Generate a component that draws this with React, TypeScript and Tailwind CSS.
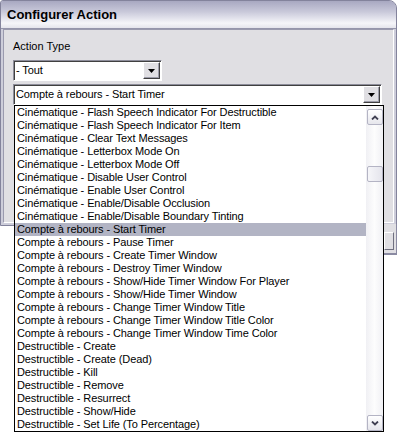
const items = [
  "Cinématique - Flash Speech Indicator For Destructible",
  "Cinématique - Flash Speech Indicator For Item",
  "Cinématique - Clear Text Messages",
  "Cinématique - Letterbox Mode On",
  "Cinématique - Letterbox Mode Off",
  "Cinématique - Disable User Control",
  "Cinématique - Enable User Control",
  "Cinématique - Enable/Disable Occlusion",
  "Cinématique - Enable/Disable Boundary Tinting",
  "Compte à rebours - Start Timer",
  "Compte à rebours - Pause Timer",
  "Compte à rebours - Create Timer Window",
  "Compte à rebours - Destroy Timer Window",
  "Compte à rebours - Show/Hide Timer Window For Player",
  "Compte à rebours - Show/Hide Timer Window",
  "Compte à rebours - Change Timer Window Title",
  "Compte à rebours - Change Timer Window Title Color",
  "Compte à rebours - Change Timer Window Time Color",
  "Destructible - Create",
  "Destructible - Create (Dead)",
  "Destructible - Kill",
  "Destructible - Remove",
  "Destructible - Resurrect",
  "Destructible - Show/Hide",
  "Destructible - Set Life (To Percentage)",
];

const selected = 9;

function DropButton() {
  return (
    <div className="flex h-[17px] w-[17px] items-center justify-center border border-t-white border-l-white border-r-[#404040] border-b-[#404040] bg-[#e0dfe3] shadow-[inset_-1px_-1px_0_#9d9daa]">
      <svg width="7" height="4" viewBox="0 0 7 4">
        <polygon points="0,0 7,0 3.5,4" fill="#000" />
      </svg>
    </div>
  );
}

function Combo({ value, width }: { value: string; width: string }) {
  return (
    <div
      className={`flex h-[21px] ${width} items-center justify-between border border-t-[#8d8d9a] border-l-[#8d8d9a] border-r-white border-b-white bg-white pr-[1px] shadow-[inset_1px_1px_0_#404040]`}
    >
      <span className="pl-[2px] text-[11px] leading-[13px] tracking-[-0.1px] text-black">{value}</span>
      <DropButton />
    </div>
  );
}

function ScrollButton({ up }: { up: boolean }) {
  return (
    <div className="flex h-[16px] w-[16px] items-center justify-center rounded-[2px] border border-[#b4b4c4] bg-[linear-gradient(to_bottom,#ffffff,#e6e6ec)]">
      <svg width="8" height="5" viewBox="0 0 8 5">
        {up ? (
          <polyline points="1,4.5 4,1.5 7,4.5" fill="none" stroke="#404052" strokeWidth="1.8" />
        ) : (
          <polyline points="1,0.5 4,3.5 7,0.5" fill="none" stroke="#404052" strokeWidth="1.8" />
        )}
      </svg>
    </div>
  );
}

export default function App() {
  return (
    <div className="relative h-[432px] w-[397px] overflow-hidden bg-white font-['Liberation_Sans',Arial,sans-serif]">
      {/* Dialog window */}
      <div className="flex h-[226px] w-[397px] flex-col overflow-hidden rounded-tl-[3px] rounded-tr-[8px] border border-[#83839c] bg-[#cdcdda]">
        <div className="flex h-[28px] shrink-0 items-center border-b border-[#9595ab] bg-[linear-gradient(to_bottom,#a8a8c1_0%,#c9c9da_40%,#f5f5f9_82%,#e4e4ec_100%)] pl-[6px] text-[13px] font-bold text-black">
          Configurer Action
        </div>
        <div className="flex-1 px-[2px] pb-[2px]">
          <div className="h-full border border-t-[#9a9aae] border-l-[#9a9aae] border-r-white border-b-white bg-[#e0dfe3] pl-[9px] pt-[10px]">
            <div className="text-[11px] leading-[13px] text-black">Action Type</div>
            <div className="mt-[7px]">
              <Combo value="- Tout" width="w-[149px]" />
            </div>
            <div className="mt-[3px]">
              <Combo value="Compte à rebours - Start Timer" width="w-[369px]" />
            </div>
          </div>
        </div>
      </div>

      {/* part of the window behind, right of the list */}
      <div className="absolute left-[384px] top-[224px] h-[31px] w-[13px] border-b-2 border-r border-[#8a8aa2] bg-[#e0dfe3] pt-[8px]">
        <div className="h-[18px] w-[10px] border border-t-white border-l-white border-b-[#707080] border-r-[#707080]" />
      </div>

      {/* Dropped-down list */}
      <div className="absolute left-[14px] top-[105px] flex h-[327px] w-[370px] border border-black bg-white">
        <div className="flex-1">
          {items.map((item, i) => (
            <div
              key={item}
              className={`h-[13px] pl-[2px] text-[11px] leading-[13px] tracking-[-0.1px] whitespace-nowrap text-black ${
                i === selected ? "bg-[#b2b4c4]" : ""
              }`}
            >
              {item}
            </div>
          ))}
        </div>
        <div className="flex w-[17px] flex-col items-center justify-between bg-[linear-gradient(to_right,#f0f0f4,#fdfdfd,#f0f0f4)] pt-[3px]">
          <ScrollButton up />
          <div className="flex flex-1 flex-col pt-[41px]">
            <div className="h-[16px] w-[16px] rounded-[2px] border border-[#b4b4c4] bg-[linear-gradient(to_right,#f6f6f9,#e4e4ec)]" />
          </div>
          <ScrollButton up={false} />
        </div>
      </div>
    </div>
  );
}
